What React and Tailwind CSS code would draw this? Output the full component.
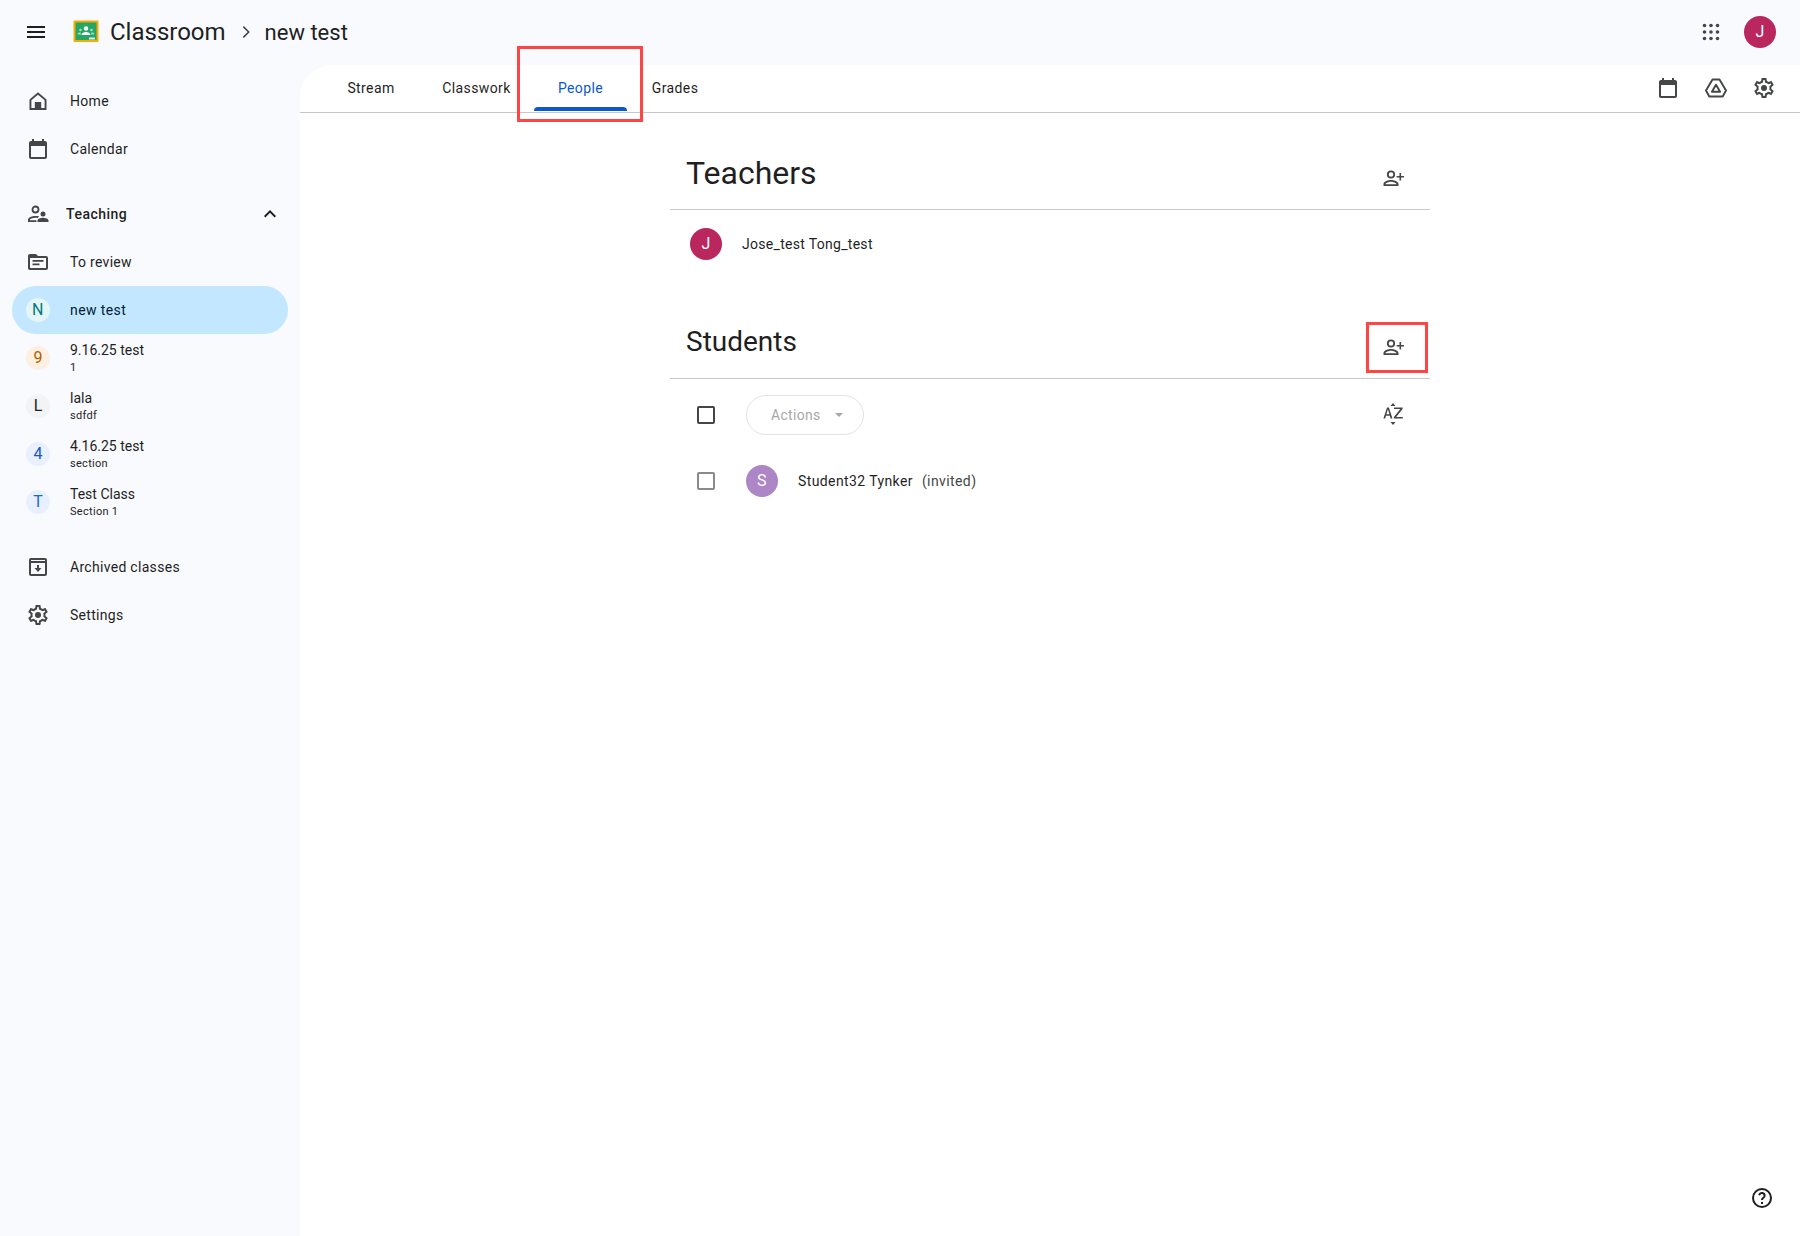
const GEAR = "M19.43 12.98c.04-.32.07-.64.07-.98s-.03-.66-.07-.98l2.11-1.65c.19-.15.24-.42.12-.64l-2-3.46c-.12-.22-.39-.3-.61-.22l-2.49 1c-.52-.4-1.08-.73-1.69-.98l-.38-2.65C14.46 2.18 14.25 2 14 2h-4c-.25 0-.46.18-.49.42l-.38 2.65c-.61.25-1.17.59-1.69.98l-2.49-1c-.23-.09-.49 0-.61.22l-2 3.46c-.13.22-.07.49.12.64l2.11 1.65c-.04.32-.07.65-.07.98s.03.66.07.98l-2.11 1.65c-.19.15-.24.42-.12.64l2 3.46c.12.22.39.3.61.22l2.49-1c.52.4 1.08.73 1.69.98l.38 2.65c.03.24.24.42.49.42h4c.25 0 .46-.18.49-.42l.38-2.65c.61-.25 1.17-.59 1.69-.98l2.49 1c.23.09.49 0 .61-.22l2-3.46c.12-.22.07-.49-.12-.64l-2.11-1.65zM17.45 11.27c.04.31.05.52.05.73 0 .21-.02.43-.05.73l-.14 1.13.89.7 1.08.84-.7 1.21-1.27-.51-1.04-.42-.9.68c-.43.32-.84.56-1.25.73l-1.06.43-.16 1.13-.2 1.35h-1.4l-.19-1.35-.16-1.13-1.06-.43c-.43-.18-.83-.41-1.23-.71l-.91-.7-1.06.43-1.27.51-.7-1.21 1.08-.84.89-.7-.14-1.13c-.03-.31-.05-.54-.05-.74s.02-.43.05-.73l.14-1.13-.89-.7-1.08-.84.7-1.21 1.27.51 1.04.42.9-.68c.43-.32.84-.56 1.25-.73l1.06-.43.16-1.13.2-1.35h1.39l.19 1.35.16 1.13 1.06.43c.43.18.83.41 1.23.71l.91.7 1.06-.43 1.27-.51.7 1.21-1.07.85-.89.7.14 1.13z";

const Svg = ({ children, size = 24, className = '' }) => (
  <svg width={size} height={size} viewBox="0 0 24 24" fill="#444746" className={`shrink-0 ${className}`}>
    {children}
  </svg>
)

const HomeIcon = () => (
  <Svg><path d="M12 3.2 3.5 10.4V21h17V10.4L12 3.2zm6.6 15.9h-3.4V13H8.8v6.1H5.4v-7.8L12 5.7l6.6 5.6v7.8z" /></Svg>
)
const CalendarIcon = () => (
  <Svg><path d="M19 4h-1V2h-2v2H8V2H6v2H5c-1.11 0-2 .9-2 2v14c0 1.1.89 2 2 2h14c1.1 0 2-.9 2-2V6c0-1.1-.9-2-2-2zm0 16H5V9h14v11z" /></Svg>
)
const GearIcon = () => (
  <Svg><path d={GEAR} /><circle cx="12" cy="12" r="3" /></Svg>
)
const TeachingIcon = () => (
  <Svg>
    <circle cx="9.5" cy="7.5" r="3" fill="none" stroke="#444746" strokeWidth="1.8" />
    <path d="M2 20v-2.2c0-2.6 4-3.9 7.500-3.900 1.200 0 2.400.15 3.500.45l-1.100 1.600c-.8-.15-1.600-.2-2.400-.2-3 0-5.600 1-5.600 2.050V18.200h6.500V20H2z" />
    <circle cx="17" cy="12" r="2.500" />
    <path d="M11.500 20v-1.400c0-1.900 3.300-2.800 5.500-2.800s5.500.9 5.500 2.800V20h-11z" />
  </Svg>
)
const ReviewIcon = () => (
  <Svg>
    <path d="M20 6h-8l-2-2H4c-1.100 0-2 .9-2 2v12c0 1.100.9 2 2 2h16c1.100 0 2-.9 2-2V8c0-1.100-.9-2-2-2zm0 12H4V8h16v10z" />
    <path d="M6.500 10h11v1.700h-11zM6.500 13.600h7v1.700h-7z" />
  </Svg>
)
const ArchiveIcon = () => (
  <Svg>
    <path d="M19 3H5c-1.100 0-2 .9-2 2v14c0 1.100.9 2 2 2h14c1.100 0 2-.9 2-2V5c0-1.100-.9-2-2-2zm0 16H5V8h14v11zM5 6V5h14v1H5z" />
    <path d="M11 10h2v3h2.500L12 17l-3.500-4H11v-3z" />
  </Svg>
)
const AddPersonIcon = () => (
  <Svg>
    <circle cx="10" cy="8.500" r="3.200" fill="none" stroke="#444746" strokeWidth="1.800" />
    <path d="M2.500 20v-2c0-2.700 5-4 7.500-4s7.500 1.300 7.500 4v2h-15zm1.900-1.800h11.200c-.2-1-3.300-2.400-5.600-2.400s-5.400 1.400-5.600 2.400z" />
    <path d="M18.500 7h1.600v2.900H23v1.600h-2.900v2.900h-1.600v-2.900h-2.900V9.900h2.900V7z" />
  </Svg>
)
const SortIcon = () => (
  <svg width="24" height="24" viewBox="0 0 24 24" fill="#444746" className="shrink-0">
    <path d="M12 1 14.500 4h-5L12 1zM12 23l-2.500-3h5L12 23z" />
    <path d="M6 5.500h1.900l3.600 11H9.600l-.8-2.700H5l-.8 2.700H2.400L6 5.500zm-.6 6.800h3L6.900 7.300l-1.500 5zM13 5.500h8.600v1.400l-6.400 8.100h6.600v1.500H12.900v-1.400l6.400-8.100H13V5.500z" />
  </svg>
)
const DriveIcon = () => (
  <svg width="24" height="24" viewBox="0 0 24 24" fill="none" stroke="#444746" strokeWidth="1.900" strokeLinejoin="round" className="shrink-0">
    <path d="M8.500 3.500h7l6.500 11-3.300 6H5.300L2 14.500l6.500-11z" />
    <path d="M12 8.700 7.900 15.800h8.200L12 8.700z" />
  </svg>
)
const AppsIcon = () => (
  <svg width="24" height="24" viewBox="0 0 24 24" fill="#444746" className="shrink-0">
    {[5.5, 12, 18.5].map((y) => [5.5, 12, 18.5].map((x) => <circle key={`${x}-${y}`} cx={x} cy={y} r="1.800" />))}
  </svg>
)
const HelpIcon = () => (
  <Svg>
    <path fill="#1f1f1f" d="M12 2a10 10 0 1 0 0 20 10 10 0 0 0 0-20zm0 18a8 8 0 1 1 0-16 8 8 0 0 1 0 16zm-1-4h2v2h-2v-2zm1.600-9.900c-2.100-.3-3.900.9-4.400 2.800l1.800.7c.3-1 1.100-1.700 2.100-1.600 1 .1 1.700 1 1.500 2-.2 1.400-2.600 1.600-2.600 4h2c0-1.600 2.400-1.900 2.600-4 .2-1.900-1-3.600-3-3.900z" />
  </Svg>
)
const Logo = () => (
  <svg width="26" height="24" viewBox="0 0 26 24" className="shrink-0">
    <rect x="0.500" y="0.500" width="25" height="21.500" rx="1" fill="#f9ab00" />
    <rect x="2.500" y="2.500" width="21" height="17.500" fill="#25a667" />
    <circle cx="13" cy="8.500" r="2.200" fill="#fff" />
    <path d="M8.500 15c0-2 2.500-3 4.500-3s4.500 1 4.500 3H8.500z" fill="#fff" />
    <circle cx="7.500" cy="10" r="1.300" fill="#a8dab5" />
    <circle cx="18.500" cy="10" r="1.300" fill="#a8dab5" />
    <path d="M4.500 14.500c0-1.500 1.500-2.200 3-2.200l.5 2.200H4.500zM21.500 14.500c0-1.500-1.500-2.200-3-2.200l-.5 2.200h3.500z" fill="#a8dab5" />
    <rect x="16" y="17.500" width="6" height="2" fill="#e6f4ea" />
  </svg>
)

const Avatar = ({ letter, bg }) => (
  <div className={`w-8 h-8 rounded-full flex items-center justify-center text-white text-base shrink-0 ${bg}`}>{letter}</div>
)

const NavRow = ({ icon, label }) => (
  <div className="h-12 flex items-center pl-[26px] gap-[20px] text-sm text-[#1f1f1f] tracking-[0.3px]">
    {icon}
    <span>{label}</span>
  </div>
)

const classes = [
  { letter: '9', sub: '1', name: '9.16.25 test', circle: 'bg-[#feefe3] text-[#b06000]' },
  { letter: 'L', sub: 'sdfdf', name: 'lala', circle: 'bg-[#f1f3f4] text-[#1f1f1f]' },
  { letter: '4', sub: 'section', name: '4.16.25 test', circle: 'bg-[#e8f0fe] text-[#1a56c4]' },
  { letter: 'T', sub: 'Section 1', name: 'Test Class', circle: 'bg-[#e8f0fe] text-[#1967d2]' },
]

const ClassRow = ({ letter, name, sub, circle }) => (
  <div className="h-12 flex items-center pl-[26px] gap-[20px] text-[#1f1f1f]">
    <div className={`w-6 h-6 rounded-full flex items-center justify-center text-base shrink-0 ${circle}`}>{letter}</div>
    <div className="flex flex-col">
      <span className="text-sm leading-[18px]">{name}</span>
      <span className="text-[11px] leading-[16px] mt-[1px] tracking-[0.3px]">{sub}</span>
    </div>
  </div>
)

const Tab = ({ label, active, className }) => (
  <div className={`relative h-full flex items-center justify-center pb-[2px] text-sm tracking-[0.4px] ${active ? 'text-[#0b57d0]' : 'text-[#1f1f1f]'} ${className}`}>
    {label}
    {active && <div className="absolute bottom-[1px] inset-x-0 h-[4px] rounded-t-[4px] bg-[#0b57d0]" />}
  </div>
)

const SectionHead = ({ title, size, marked }) => (
  <div className={`relative h-[97px] flex items-center justify-between pl-4 pr-[25px] border-b border-[#c7c7c7] text-[#1f1f1f] ${size}`}>
    <span className="leading-10 mt-[23px]">{title}</span>
    <div className="mt-[34px]"><AddPersonIcon /></div>
    {marked && <div className="absolute right-[2px] bottom-[5px] w-[62px] h-[51px] border-[3px] border-[#ff4444]" />}
  </div>
)

export default function App() {
  return (
    <div className="h-[1236px] flex flex-col overflow-hidden bg-[#f8fafd] font-['Roboto',sans-serif]">
      {/* top bar */}
      <header className="h-[65px] shrink-0 flex items-center pl-6 pr-6 pb-[1px]">
        <svg width="24" height="24" viewBox="0 0 24 24" fill="#1f1f1f" className="shrink-0">
          <path d="M3 18h18v-2H3v2zm0-5h18v-2H3v2zm0-7v2h18V6H3z" />
        </svg>
        <div className="ml-[25px]"><Logo /></div>
        <span className="ml-[11px] text-2xl text-[#1f1f1f]">Classroom</span>
        <svg width="16" height="16" viewBox="0 0 24 24" fill="none" stroke="#444746" strokeWidth="2.400" className="ml-3 shrink-0">
          <path d="m8 4 8 8-8 8" />
        </svg>
        <span className="ml-[11px] text-[22px] text-[#1f1f1f]">new test</span>
        <div className="ml-auto"><AppsIcon /></div>
        <div className="ml-[21px] w-8 h-8 rounded-full bg-[#b9275e] flex items-center justify-center text-white text-base">J</div>
      </header>

      <div className="flex-1 flex min-h-0">
        {/* sidebar */}
        <aside className="w-[300px] shrink-0 pt-3">
          <NavRow icon={<HomeIcon />} label="Home" />
          <NavRow icon={<CalendarIcon />} label="Calendar" />
          <div className="mt-[17px] h-12 flex items-center pl-[26px] pr-[18px] text-sm font-medium text-[#1f1f1f] tracking-[0.5px]">
            <TeachingIcon />
            <span className="ml-4">Teaching</span>
            <svg width="24" height="24" viewBox="0 0 24 24" fill="#1f1f1f" className="ml-auto shrink-0">
              <path d="M12 8 6 14l1.400 1.400 4.600-4.600 4.600 4.600L18 14z" />
            </svg>
          </div>
          <NavRow icon={<ReviewIcon />} label="To review" />
          <div className="w-[276px] ml-3 h-12 rounded-3xl bg-[#c2e7ff] flex items-center pl-[14px] gap-[20px] text-sm text-[#001d35] tracking-[0.4px]">
            <div className="w-6 h-6 rounded-full bg-[#e3f6f5] text-[#007b83] flex items-center justify-center text-base shrink-0">N</div>
            <span>new test</span>
          </div>
          {classes.map((c) => <ClassRow key={c.name} {...c} />)}
          <div className="mt-[17px]">
            <NavRow icon={<ArchiveIcon />} label="Archived classes" />
            <NavRow icon={<GearIcon />} label="Settings" />
          </div>
        </aside>

        {/* main */}
        <main className="relative flex-1 bg-white rounded-tl-[32px] min-w-0">
          <nav className="relative h-12 flex items-center border-b border-[#c7c7c7] pr-6">
            <Tab label="Stream" className="ml-[48px] w-[46px]" />
            <Tab label="Classwork" className="ml-[49px] w-[67px]" />
            <Tab label="People" active className="ml-[24px] w-[93px]" />
            <Tab label="Grades" className="ml-[24px] w-[48px]" />
            <div className="ml-auto flex items-center gap-6 pb-[2px]">
              <CalendarIcon />
              <DriveIcon />
              <GearIcon />
            </div>
            <div className="absolute left-[217px] top-[-19px] w-[126px] h-[76px] border-[3px] border-[#ff4444]" />
          </nav>

          <div className="w-[760px] mx-auto">
            <SectionHead title="Teachers" size="text-[32px]" />
            <div className="h-[68px] flex items-center pl-5 gap-5 text-sm text-[#1f1f1f]">
              <Avatar letter="J" bg="bg-[#b9275e]" />
              <span className="tracking-[0.3px]">Jose_test Tong_test</span>
            </div>
            <div className="mt-[4px]">
              <SectionHead title="Students" size="text-[28px]" marked />
            </div>
            <div className="h-[72px] flex items-center pl-[27px] pr-[25px]">
              <div className="w-[18px] h-[18px] rounded-[2px] border-2 border-[#444746] shrink-0" />
              <div className="ml-[31px] w-[118px] h-10 rounded-full border border-[#e3e3e3] flex items-center pl-[24px] gap-[14px] text-sm text-[#a8a8a8] tracking-[0.3px]">
                <span>Actions</span>
                <div className="w-0 h-0 border-x-[4px] border-x-transparent border-t-[4px] border-t-[#a8a8a8]" />
              </div>
              <div className="ml-auto mt-[-2px]"><SortIcon /></div>
            </div>
            <div className="h-[60px] flex items-center pl-[27px] text-sm text-[#1f1f1f] tracking-[0.4px]">
              <div className="w-[18px] h-[18px] rounded-[2px] border-2 border-[#8a8a8a] shrink-0" />
              <div className="ml-[31px]"><Avatar letter="S" bg="bg-[#ac86c5]" /></div>
              <span className="ml-5">Student32 Tynker</span>
              <span className="ml-[9px] text-[#444746]">(invited)</span>
            </div>
          </div>

          {/* help button stays pinned in the corner */}
          <div className="absolute right-[26px] bottom-[26px]"><HelpIcon /></div>
        </main>
      </div>
    </div>
  )
}
